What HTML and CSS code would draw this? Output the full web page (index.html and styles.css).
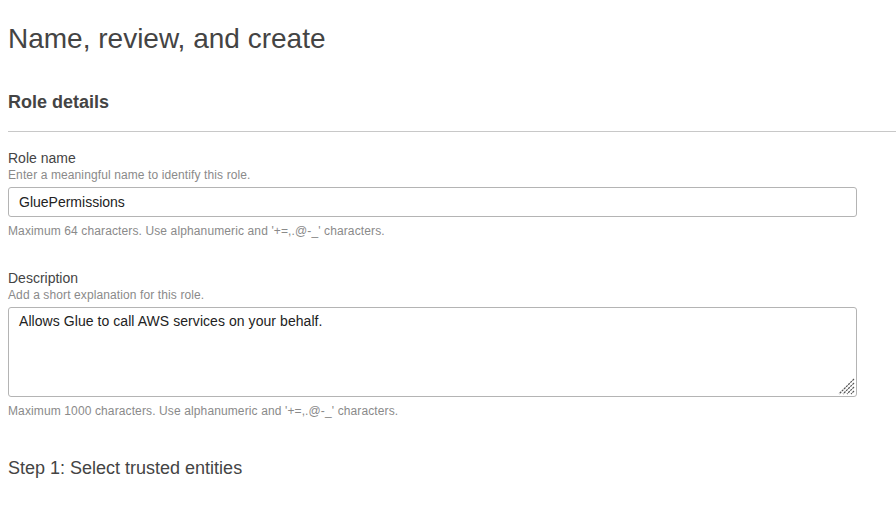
FILE: index.html
```html
<!DOCTYPE html>
<html lang="en">
<head>
<meta charset="utf-8">
<title>Name, review, and create</title>
<link rel="stylesheet" href="styles.css">
</head>
<body>
<h1 class="page-title">Name, review, and create</h1>
<h2 class="section-title">Role details</h2>
<hr class="divider">
<div class="field field-name">
  <label class="field-label" for="role-name">Role name</label>
  <div class="field-hint">Enter a meaningful name to identify this role.</div>
  <input class="text-input" id="role-name" type="text" value="GluePermissions">
  <div class="field-constraint">Maximum 64 characters. Use alphanumeric and '+=,.@-_' characters.</div>
</div>
<div class="field field-desc">
  <label class="field-label" for="role-desc">Description</label>
  <div class="field-hint">Add a short explanation for this role.</div>
  <div class="textarea-wrap">
    <textarea class="text-area" id="role-desc">Allows Glue to call AWS services on your behalf.</textarea>
    <svg class="grip" width="17" height="17" viewBox="0 0 17 17" aria-hidden="true">
      <path d="M16 1 L1 16 M16 5 L5 16 M16 9 L9 16 M16 13 L13 16" stroke="#555555" stroke-width="1.2" stroke-dasharray="2.2 0.8" fill="none"/>
    </svg>
  </div>
  <div class="field-constraint">Maximum 1000 characters. Use alphanumeric and '+=,.@-_' characters.</div>
</div>
<h3 class="step-title">Step 1: Select trusted entities</h3>
</body>
</html>
```
FILE: styles.css
```css
html, body {
  background: #ffffff;
}
body {
  margin: 0 0 0 8px;
  font-family: "Liberation Sans", Arial, sans-serif;
  color: #444444;
}
.page-title {
  margin: 22px 0 0;
  font-size: 28px;
  line-height: 34px;
  font-weight: normal;
  color: #444444;
}
.section-title {
  margin: 35px 0 0;
  font-size: 18px;
  line-height: 22px;
  font-weight: bold;
  color: #444444;
}
.divider {
  margin: 18px 0 0;
  border: 0;
  border-top: 1px solid #c8c8c8;
  height: 0;
}
.field {
  width: 849px;
}
.field-name {
  margin-top: 18px;
}
.field-desc {
  margin-top: 31px;
}
.field-label {
  display: block;
  font-size: 14px;
  line-height: 17px;
  color: #444444;
}
.field-hint {
  font-size: 12px;
  line-height: 16px;
  letter-spacing: 0.11px;
  color: #8a8a8a;
}
.field-constraint {
  margin-top: 6px;
  font-size: 12px;
  line-height: 16px;
  letter-spacing: 0.12px;
  color: #8a8a8a;
}
.text-input {
  display: block;
  box-sizing: border-box;
  width: 849px;
  height: 30px;
  margin: 4px 0 0;
  padding: 0 10px;
  border: 1px solid #b4b4b4;
  border-radius: 3px;
  font-family: "Liberation Sans", Arial, sans-serif;
  font-size: 14px;
  color: #222222;
  background: #ffffff;
  outline: none;
}
.textarea-wrap {
  position: relative;
  margin-top: 4px;
  width: 849px;
  height: 90px;
}
.text-area {
  display: block;
  box-sizing: border-box;
  width: 849px;
  height: 90px;
  margin: 0;
  padding: 5px 10px;
  border: 1px solid #b4b4b4;
  border-radius: 3px;
  font-family: "Liberation Sans", Arial, sans-serif;
  font-size: 14px;
  line-height: 17px;
  letter-spacing: 0.06px;
  color: #222222;
  background: #ffffff;
  resize: none;
  outline: none;
}
.grip {
  position: absolute;
  right: 2px;
  bottom: 2px;
}
.step-title {
  margin: 37px 0 0;
  font-size: 18px;
  line-height: 24px;
  font-weight: normal;
  color: #444444;
}
```
